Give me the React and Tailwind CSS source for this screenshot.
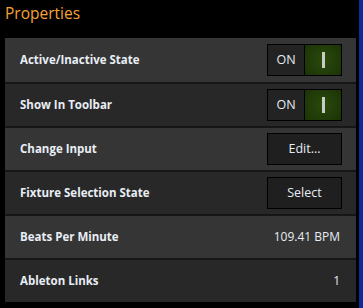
import { useState } from "react";

const font = { fontFamily: '"Open Sans", "Noto Sans", sans-serif' };

function Toggle({ on }) {
  return (
    <div className="flex h-[32px] w-[75px] border border-black">
      <div className="flex w-[36px] items-center justify-center bg-[#232323] text-[12.5px] text-[#e6ecf2]">
        {on ? "ON" : "OFF"}
      </div>
      <div className="flex flex-1 items-center justify-center border-l border-black bg-[radial-gradient(circle,#2a4a0c,#1b3306)]">
        <div className="h-[16px] w-[3px] bg-[#c8ccc4]" />
      </div>
    </div>
  );
}

function Button({ children }) {
  return (
    <button className="flex h-[32px] w-[75px] items-center justify-center border border-black bg-[#1f1f1f] text-[12.5px] text-[#e6ecf2]">
      {children}
    </button>
  );
}

function App() {
  const [rows] = useState([
    { label: "Active/Inactive State", kind: "toggle" },
    { label: "Show In Toolbar", kind: "toggle" },
    { label: "Change Input", kind: "button", text: "Edit..." },
    { label: "Fixture Selection State", kind: "button", text: "Select" },
    { label: "Beats Per Minute", kind: "value", text: "109.41 BPM" },
    { label: "Ableton Links", kind: "value", text: "1" },
  ]);

  return (
    <div className="flex h-[308px] w-[363px] bg-black" style={font}>
      <div className="flex flex-1 flex-col">
        <h1 className="ml-[5px] h-[38px] pt-[1px] text-[15.5px] leading-[24px] text-[#f5a337]">
          Properties
        </h1>
        <div className="ml-[5px] mr-[3px] flex flex-col">
          {rows.map((row, i) => (
            <div
              key={i}
              className={`flex h-[44px] items-center justify-between pl-[15px] pr-[14px] ${
                i > 0 ? "border-t-2 border-[#161616]" : ""
              } ${i % 2 === 0 ? "bg-[#353535]" : "bg-[#282828]"}`}
            >
              <span className="text-[11.5px] font-bold text-[#e8eef5]">{row.label}</span>
              {row.kind === "toggle" && <Toggle on />}
              {row.kind === "button" && <Button>{row.text}</Button>}
              {row.kind === "value" && (
                <span className="pr-[2px] text-[12px] text-[#e6ecf2]">{row.text}</span>
              )}
            </div>
          ))}
        </div>
      </div>
      <div className="w-[4px] bg-[#0b2b9a]" />
    </div>
  );
}

export default App;
